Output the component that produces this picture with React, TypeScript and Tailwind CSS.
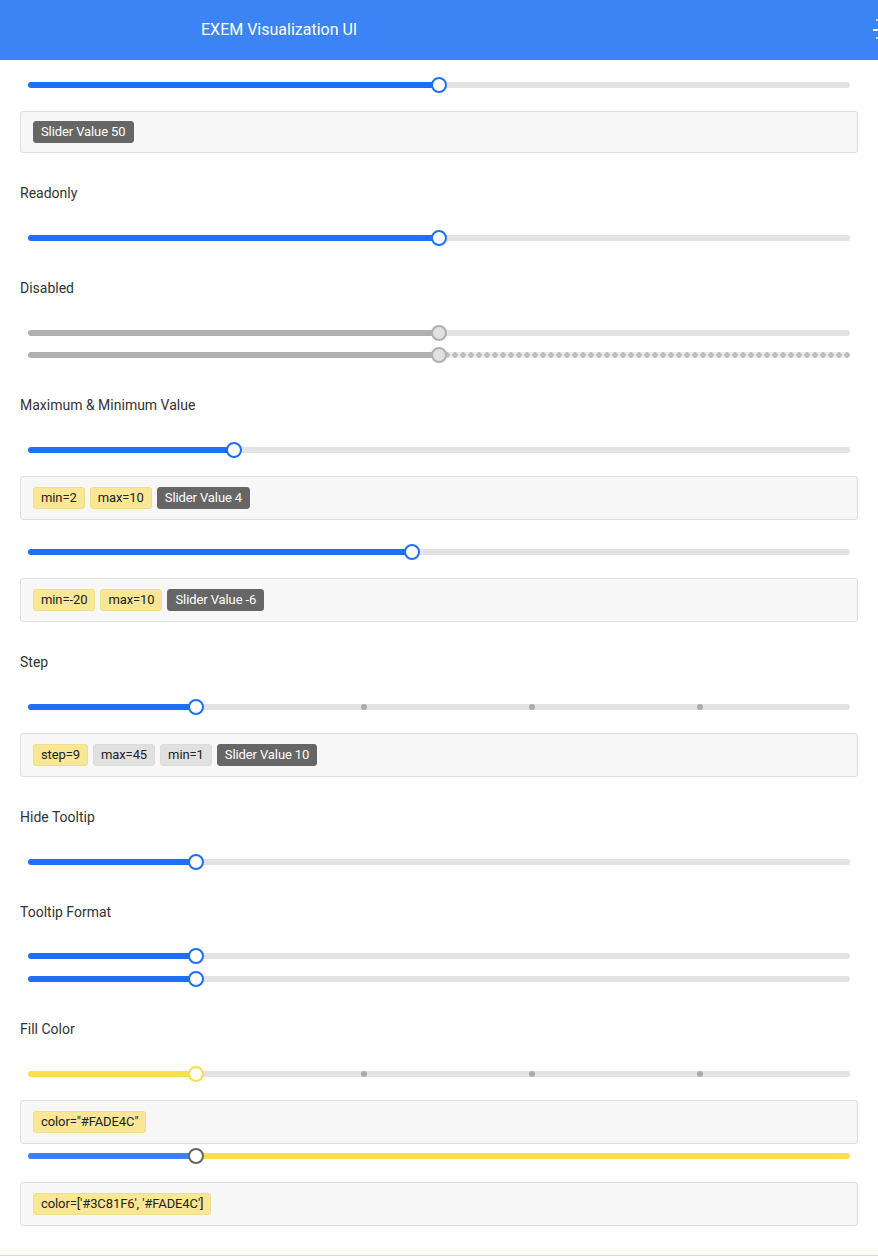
import React from 'react'

type SliderProps = {
  pct: number
  fill?: string
  rest?: string
  thumb?: string
  thumbBg?: string
  ticks?: number[]
  dotted?: boolean
  className?: string
}

function Slider({
  pct,
  fill = 'bg-[#1f6ef6]',
  rest = 'bg-[#e3e3e3]',
  thumb = 'border-[#1f6ef6]',
  thumbBg = 'bg-white',
  ticks = [],
  dotted = false,
  className = '',
}: SliderProps) {
  return (
    <div className={`relative mx-[28px] flex h-[20px] items-center ${className}`}>
      <div className={`h-[6px] rounded-l-full ${fill}`} style={{ width: `${pct}%` }} />
      {dotted ? (
        <div className="h-[6px] flex-1 rounded-r-full bg-[#ececec] bg-[radial-gradient(circle,#bdbdbd_2.5px,transparent_3px)] bg-[length:8px_6px] bg-[position:4px_0]" />
      ) : (
        <div className={`h-[6px] flex-1 rounded-r-full ${rest}`} />
      )}
      {ticks.map((t) => (
        <span
          key={t}
          className="absolute top-[7px] h-[6px] w-[6px] -translate-x-1/2 rounded-full bg-[#ababab]"
          style={{ left: `${t}%` }}
        />
      ))}
      <span
        className={`absolute top-[2px] h-[16px] w-[16px] -translate-x-1/2 rounded-full border-2 ${thumb} ${thumbBg}`}
        style={{ left: `${pct}%` }}
      />
    </div>
  )
}

function Box({ children, h = 'h-[44px]', className = '' }: { children: React.ReactNode; h?: string; className?: string }) {
  return (
    <div
      className={`mx-[20px] flex ${h} items-center gap-[5px] rounded-[3px] border border-[#dedede] bg-[#f7f7f7] px-[12px] ${className}`}
    >
      {children}
    </div>
  )
}

function Tag({ children, kind = 'yellow' }: { children: React.ReactNode; kind?: 'yellow' | 'gray' | 'dark' }) {
  const styles = {
    yellow: 'border-[#f1de8a] bg-[#f9e795] text-[#222]',
    gray: 'border-[#dcdcdc] bg-[#e0e0e0] text-[#222]',
    dark: 'border-[#666] bg-[#666] text-white',
  }
  return (
    <span className={`inline-flex h-[22px] items-center rounded-[3px] border px-[7px] text-[13px] tracking-[-0.1px] ${styles[kind]}`}>
      {children}
    </span>
  )
}

function Label({ children, className = '' }: { children: React.ReactNode; className?: string }) {
  return <p className={`mx-[20px] h-[20px] text-[14px] leading-[20px] text-[#333] ${className}`}>{children}</p>
}

const stepTicks = [40.9, 61.36, 81.8]

export default function App() {
  return (
    <div className="min-h-[1258px] bg-white font-['Roboto','Liberation_Sans',sans-serif]">
      <header className="relative flex h-[60px] items-center overflow-hidden bg-[#3c83f6] pl-[201px]">
        <h1 className="text-[16px] text-white">EXEM Visualization UI</h1>
        <span className="absolute right-0 top-[29px] h-[2px] w-[5px] bg-white/90" />
        <span className="absolute right-0 top-[19px] h-[2px] w-[2px] bg-white/70" />
        <span className="absolute right-0 top-[37px] h-[2px] w-[2px] bg-white/70" />
      </header>

      <main className="pb-[29px]">
        <Slider pct={50} className="mt-[15px]" />
        <Box h="h-[42px]" className="mt-[16px]">
          <Tag kind="dark">Slider Value 50</Tag>
        </Box>

        <Label className="mt-[30px]">Readonly</Label>
        <Slider pct={50} className="mt-[25px]" />

        <Label className="mt-[30px]">Disabled</Label>
        <Slider
          pct={50}
          fill="bg-[#b0b0b0]"
          rest="bg-[#e3e3e3]"
          thumb="border-[#b0b0b0]"
          thumbBg="bg-[#e0e0e0]"
          className="mt-[25px]"
        />
        <Slider
          pct={50}
          fill="bg-[#b0b0b0]"
          thumb="border-[#b0b0b0]"
          thumbBg="bg-[#e0e0e0]"
          dotted
          className="mt-[2px]"
        />

        <Label className="mt-[30px]">Maximum &amp; Minimum Value</Label>
        <Slider pct={25} className="mt-[25px]" />
        <Box className="mt-[16px]">
          <Tag>min=2</Tag>
          <Tag>max=10</Tag>
          <Tag kind="dark">Slider Value 4</Tag>
        </Box>
        <Slider pct={46.67} className="mt-[22px]" />
        <Box className="mt-[16px]">
          <Tag>min=-20</Tag>
          <Tag>max=10</Tag>
          <Tag kind="dark">Slider Value -6</Tag>
        </Box>

        <Label className="mt-[30px]">Step</Label>
        <Slider pct={20.45} ticks={stepTicks} className="mt-[25px]" />
        <Box className="mt-[16px]">
          <Tag>step=9</Tag>
          <Tag kind="gray">max=45</Tag>
          <Tag kind="gray">min=1</Tag>
          <Tag kind="dark">Slider Value 10</Tag>
        </Box>

        <Label className="mt-[30px]">Hide Tooltip</Label>
        <Slider pct={20.45} className="mt-[25px]" />

        <Label className="mt-[30px]">Tooltip Format</Label>
        <Slider pct={20.45} className="mt-[24px]" />
        <Slider pct={20.45} className="mt-[3px]" />

        <Label className="mt-[30px]">Fill Color</Label>
        <Slider
          pct={20.45}
          fill="bg-[#fade4c]"
          thumb="border-[#fade4c]"
          ticks={stepTicks}
          className="mt-[25px]"
        />
        <Box className="mt-[16px]">
          <Tag>color="#FADE4C"</Tag>
        </Box>
        <Slider
          pct={20.45}
          fill="bg-[#3c81f6]"
          rest="bg-[#fade4c]"
          thumb="border-[#666]"
          className="mt-[2px]"
        />
        <Box className="mt-[16px]">
          <Tag>color=['#3C81F6', '#FADE4C']</Tag>
        </Box>
      </main>
      <div className="h-px bg-[#fade4c]" />
    </div>
  )
}
